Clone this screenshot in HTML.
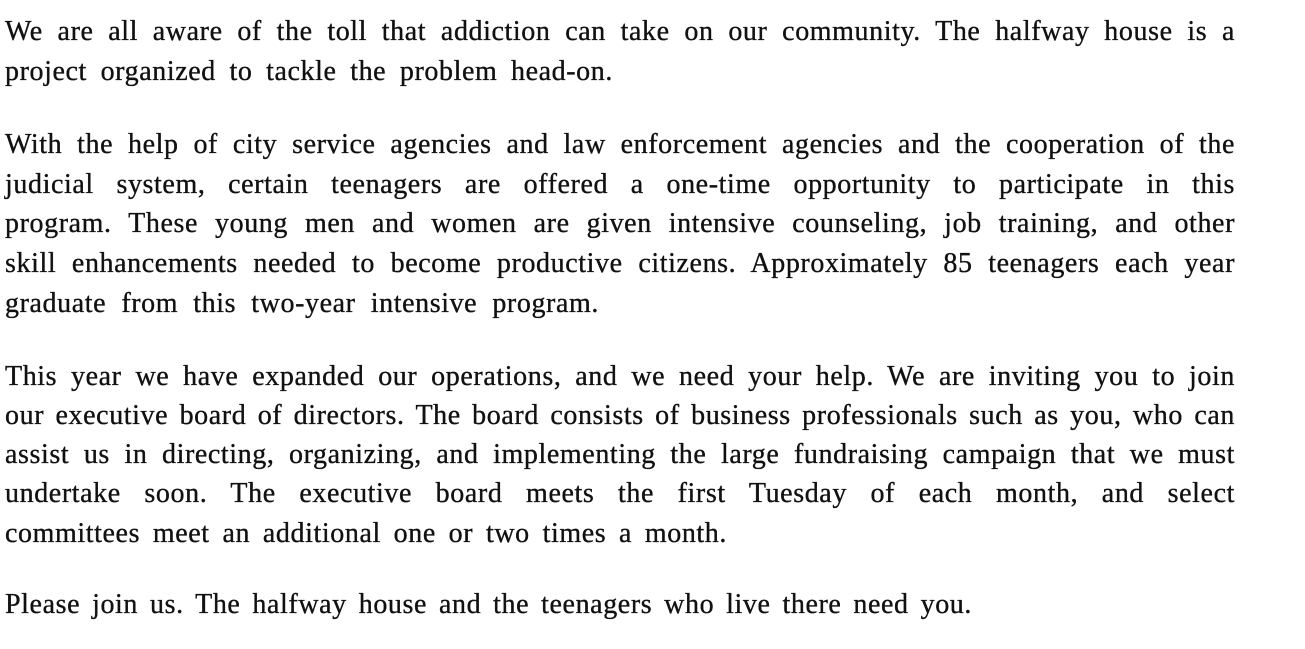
<!DOCTYPE html>
<html><head><meta charset="utf-8"><style>
html,body{margin:0;padding:0;background:#fff;width:1305px;height:649px;overflow:hidden}
.l{position:absolute;left:5px;height:40px;line-height:40px;font-family:"Liberation Serif",serif;font-size:28px;color:#111;white-space:nowrap;text-align:justify;text-align-last:justify;letter-spacing:0.6px;-webkit-text-stroke:0.35px #111}
</style></head><body>
<div class="l" style="top:12px;width:1230px">We are all aware of the toll that addiction can take on our community. The halfway house is a</div>
<div class="l" style="top:52px;width:608px">project organized to tackle the problem head-on.</div>
<div class="l" style="top:125px;width:1230px">With the help of city service agencies and law enforcement agencies and the cooperation of the</div>
<div class="l" style="top:165px;width:1230px">judicial system, certain teenagers are offered a one-time opportunity to participate in this</div>
<div class="l" style="top:204px;width:1230px">program. These young men and women are given intensive counseling, job training, and other</div>
<div class="l" style="top:244px;width:1230px">skill enhancements needed to become productive citizens. Approximately 85 teenagers each year</div>
<div class="l" style="top:284px;width:594px">graduate from this two-year intensive program.</div>
<div class="l" style="top:357px;width:1230px">This year we have expanded our operations, and we need your help. We are inviting you to join</div>
<div class="l" style="top:396px;width:1230px">our executive board of directors. The board consists of business professionals such as you, who can</div>
<div class="l" style="top:435px;width:1230px">assist us in directing, organizing, and implementing the large fundraising campaign that we must</div>
<div class="l" style="top:474px;width:1230px">undertake soon. The executive board meets the first Tuesday of each month, and select</div>
<div class="l" style="top:514px;width:722px">committees meet an additional one or two times a month.</div>
<div class="l" style="top:585px;width:967px">Please join us. The halfway house and the teenagers who live there need you.</div>
</body></html>
